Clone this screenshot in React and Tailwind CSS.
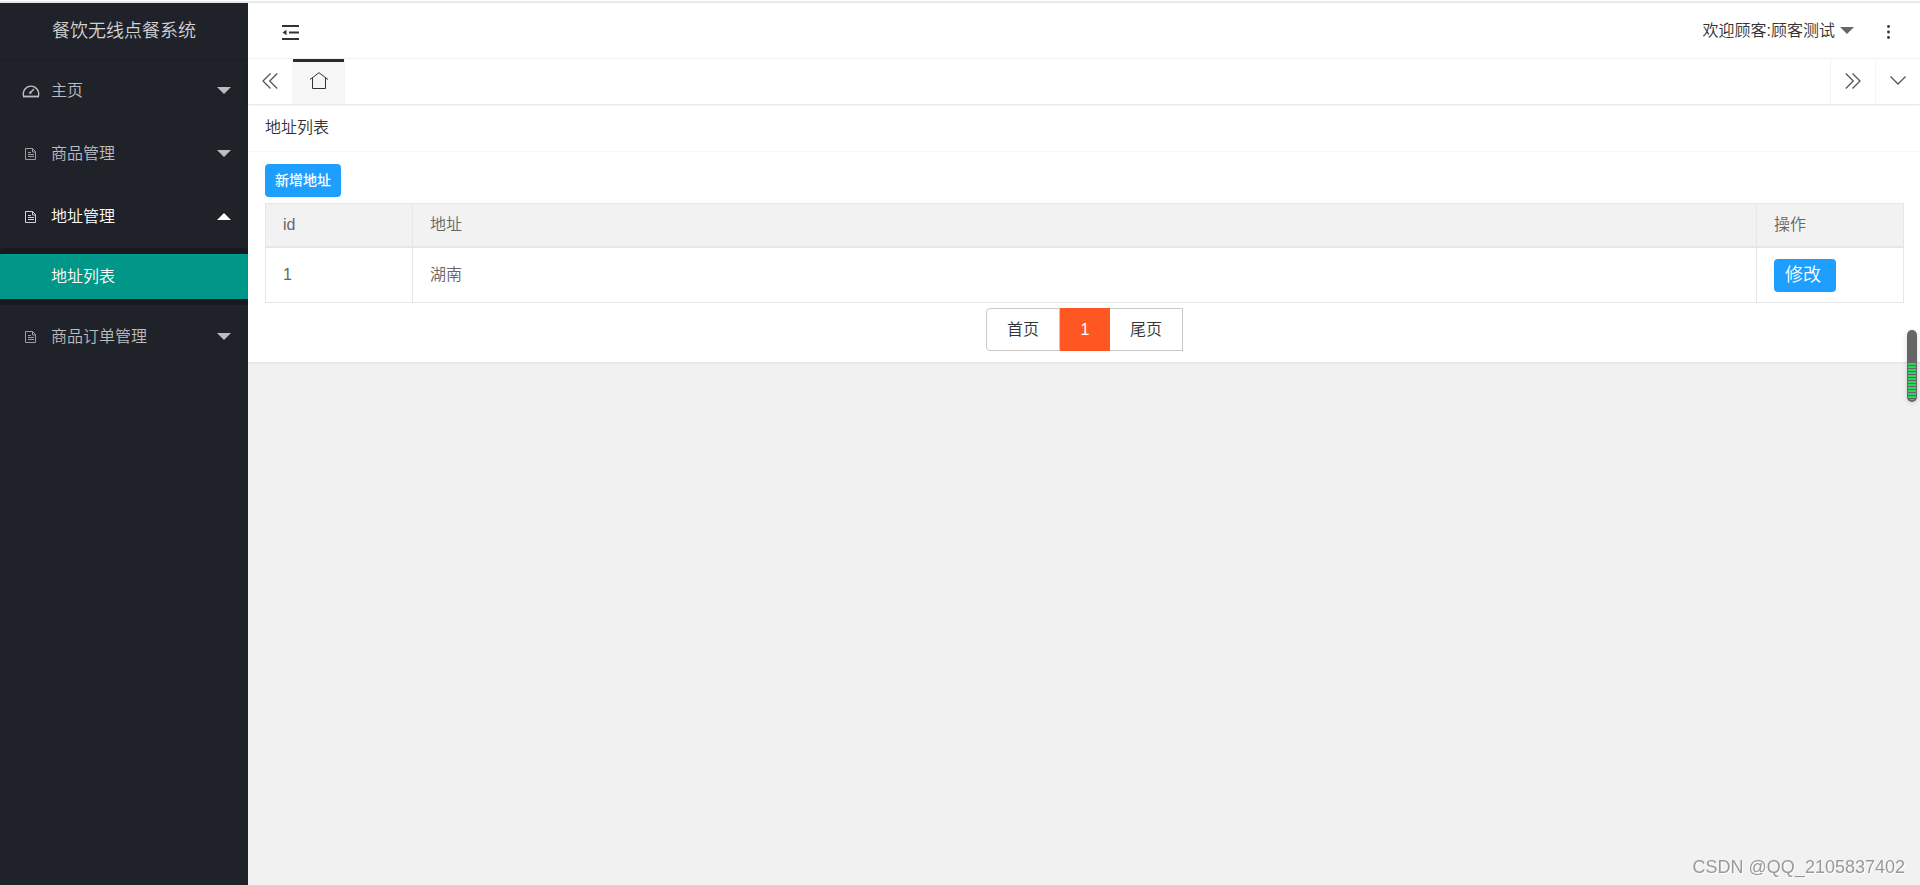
const bars = [363, 366, 369, 372, 375, 378, 381, 384, 387, 390, 393, 396];

function Caret({ up, className }) {
  return (
    <svg viewBox="0 0 14 7" className={`h-[7px] w-[14px] shrink-0 fill-current ${className || ''}`} aria-hidden="true">
      <path d={up ? 'M0 7 7 0l7 7z' : 'M0 0h14L7 7z'} />
    </svg>
  );
}

function GaugeIcon() {
  return (
    <svg viewBox="0 0 18 16" className="h-4 w-[18px] fill-none stroke-current" aria-hidden="true">
      <path d="M1.600 13A7.700 7.700 0 1 1 16.400 13" strokeWidth="1.4" />
      <path d="M1 13.500h16" strokeWidth="1.800" />
      <path d="M8.500 9.500 12 6" strokeWidth="1.5" />
      <circle cx="8.3" cy="9.7" r="1.2" fill="currentColor" stroke="none" />
    </svg>
  );
}

function FileIcon() {
  return (
    <svg viewBox="0 0 12 12" className="h-3 w-3 fill-none stroke-current opacity-80" strokeWidth="1" aria-hidden="true">
      <path d="M.5.5h7l3 3v8H.5zM7.500.5v3.500h3M3 4.500h3M3 6.500h6M3 8.500h6" />
    </svg>
  );
}

function Chevrons({ right }) {
  return (
    <svg viewBox="0 0 16 16" className="h-4 w-4 fill-none stroke-current" strokeWidth="1.3" aria-hidden="true">
      <path d={right ? 'M.8.5 8.300 8 .8 15.500M7.500.5 15 8l-7.500 7.500' : 'M8.500.5 1 8l7.500 7.500M15.200.5 7.700 8l7.500 7.500'} />
    </svg>
  );
}

function MenuItem({ icon, label, open }) {
  return (
    <button
      type="button"
      aria-expanded={!!open}
      className={`flex h-[63px] w-full items-center pr-[17px] pl-[21px] text-left ${open ? 'text-white' : 'text-[#bcbdbf]'}`}
    >
      <span className="flex w-[30px] shrink-0 items-center">
        <span className="flex w-[19px] justify-center">{icon}</span>
      </span>
      <span className="flex-1">{label}</span>
      <Caret up={open} />
    </button>
  );
}

function Sidebar() {
  return (
    <aside className="w-[248px] shrink-0 bg-[#20222a]">
      <h1 className="flex h-14 items-center justify-center text-lg font-[350] text-[#d2d3d4] shadow-[0_1px_2px_rgba(0,0,0,0.15)]">
        餐饮无线点餐系统
      </h1>
      <nav>
        <MenuItem icon={<GaugeIcon />} label="主页" />
        <MenuItem icon={<FileIcon />} label="商品管理" />
        <MenuItem icon={<FileIcon />} label="地址管理" open />
        <div className="rounded-sm bg-[#18191f] py-1.5">
          <a href="#list" className="flex h-[45px] items-center bg-[#009688] pl-[51px] text-white">
            地址列表
          </a>
        </div>
        <MenuItem icon={<FileIcon />} label="商品订单管理" />
      </nav>
    </aside>
  );
}

function TopBar() {
  return (
    <header className="flex h-14 items-center justify-between border-b border-[#f4f4f4] bg-white pr-[30px] pl-[34px] text-[#333]">
      <button type="button" aria-label="收起菜单" className="pt-1">
        <svg viewBox="0 0 17 15" className="h-[15px] w-[17px] fill-current" aria-hidden="true">
          <path d="M0 0h17v2H0zM7 6.500h10v2H7zM0 13h17v2H0zM4.500 4.700v5.600L.5 7.500z" />
        </svg>
      </button>
      <div className="flex items-center gap-[33px]">
        <button type="button" className="flex items-center gap-[5px]">
          欢迎顾客:顾客测试
          <Caret className="text-[#666]" />
        </button>
        <button type="button" aria-label="更多" className="pt-0.5">
          <svg viewBox="0 0 3 14" className="h-[14px] w-[3px] fill-current" aria-hidden="true">
            <circle cx="1.500" cy="1.500" r="1.400" />
            <circle cx="1.500" cy="7" r="1.400" />
            <circle cx="1.500" cy="12.500" r="1.400" />
          </svg>
        </button>
      </div>
    </header>
  );
}

function TabBar() {
  return (
    <div className="relative flex h-[45px] bg-white text-[#555] shadow-[0_1px_2px_rgba(0,0,0,0.12)]">
      <button type="button" aria-label="向左" className="flex w-11 items-center justify-center pb-0.5">
        <Chevrons />
      </button>
      <button type="button" aria-label="首页" className="flex w-[53px] flex-col items-center bg-[#f6f6f6] px-[1px]">
        <span className="h-[3px] w-full bg-[#292b34]" />
        <svg viewBox="0 0 18 17" className="mt-2.5 h-[17px] w-[18px] fill-none stroke-[#333]" strokeWidth="1" aria-hidden="true">
          <path d="M0 7.500 9 .7l9 6.800M2.500 6v10.500h13V6" />
        </svg>
      </button>
      <button type="button" aria-label="向右" className="ml-auto flex w-[45px] items-center justify-center border-l border-[#f4f4f4] pb-0.5">
        <Chevrons right />
      </button>
      <button type="button" aria-label="标签操作" className="flex w-[45px] items-center justify-center border-l border-[#f4f4f4] pb-0.5">
        <svg viewBox="0 0 16 9" className="h-[9px] w-4 fill-none stroke-current" strokeWidth="1.300" aria-hidden="true">
          <path d="m.5.5 7.500 7.500L15.500.5" />
        </svg>
      </button>
    </div>
  );
}

function AddressTable() {
  return (
    <table className="mt-1.5 w-full table-fixed border-separate border-spacing-0 border-t border-l border-[#e6e6e6] text-left text-[#666]">
      <colgroup>
        <col className="w-[147px]" />
        <col />
        <col className="w-[147px]" />
      </colgroup>
      <thead className="bg-[#f2f2f2]">
        <tr className="h-11">
          <th className="border-r border-b-2 border-[#e6e6e6] px-[17px] font-[350]">id</th>
          <th className="border-r border-b-2 border-[#e6e6e6] px-[17px] font-[350]">地址</th>
          <th className="border-r border-b-2 border-[#e6e6e6] px-[17px] font-[350]">操作</th>
        </tr>
      </thead>
      <tbody>
        <tr className="h-[55px]">
          <td className="border-r border-b border-[#e6e6e6] px-[17px]">1</td>
          <td className="border-r border-b border-[#e6e6e6] px-[17px]">湖南</td>
          <td className="border-r border-b border-[#e6e6e6] px-[17px]">
            <button type="button" className="flex h-[33px] w-[62px] items-center rounded-sm bg-[#1e9fff] pl-[11px] text-lg text-white">
              修改
            </button>
          </td>
        </tr>
      </tbody>
    </table>
  );
}

function Pagination() {
  return (
    <nav aria-label="分页" className="mt-[5px] flex h-[43px] justify-center text-[#333]">
      <a href="#first" className="flex w-[74px] items-center justify-center rounded-l-sm border border-[#c9c9c9]">首页</a>
      <a href="#page-1" aria-current="page" className="flex w-[50px] items-center justify-center bg-[#ff5722] text-white">1</a>
      <a href="#last" className="flex w-[73px] items-center justify-center border border-l-0 border-[#c9c9c9]">尾页</a>
    </nav>
  );
}

function FloatingMeter() {
  return (
    <div className="fixed top-[330px] right-[3px] h-[72px] w-2.5 rounded-full bg-[#666] shadow-[0_1px_5px_rgba(0,0,0,0.15)]">
      <svg viewBox="1907 330 10 72" className="h-full w-full fill-[#2fd160]" aria-hidden="true">
        {bars.map((y) => (
          <rect key={y} x="1908" y={y} width="8" height="2" />
        ))}
        <rect x="1910" y="399" width="4" height="1" />
      </svg>
    </div>
  );
}

export default function App() {
  return (
    <div className="flex min-h-screen flex-col bg-white font-['Liberation_Sans','Noto_Sans_CJK_SC',sans-serif] text-base font-[350]">
      <div className="mt-[1px] h-0.5 bg-[#e6eaee]" />
      <div className="flex flex-1">
        <Sidebar />
        <div className="flex min-w-0 flex-1 flex-col bg-[#f1f1f1]">
          <TopBar />
          <TabBar />
          <main className="bg-white shadow-[0_1px_2px_rgba(0,0,0,0.08)]">
            <h2 className="flex h-12 items-center border-b border-[#f6f6f6] pl-[17px] font-[350] text-[#333]">地址列表</h2>
            <div className="pt-3 pr-4 pb-[11px] pl-[17px]">
              <button type="button" className="flex h-[33px] w-[76px] items-center justify-center rounded-sm bg-[#1e9fff] pb-0.5 text-sm font-medium text-white">
                新增地址
              </button>
              <AddressTable />
              <Pagination />
            </div>
          </main>
        </div>
      </div>
      <FloatingMeter />
      <p className="fixed right-[15px] bottom-1.5 font-['Liberation_Sans',sans-serif] text-lg leading-6 text-[#999] [text-shadow:1px_1px_0_#fff]">
        CSDN @QQ_2105837402
      </p>
    </div>
  );
}
